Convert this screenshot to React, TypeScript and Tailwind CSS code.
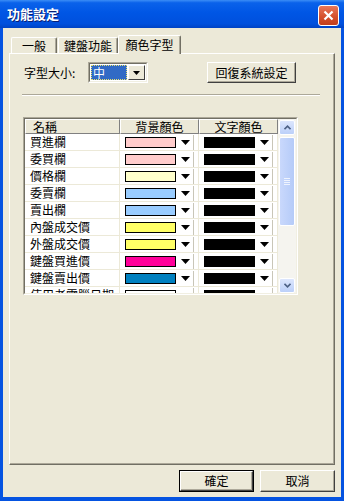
import { useState } from "react";

const rows = [
  { name: "買進欄", bg: "bg-[#FFCCCC]" },
  { name: "委買欄", bg: "bg-[#FFCCCC]" },
  { name: "價格欄", bg: "bg-[#FFFFCC]" },
  { name: "委賣欄", bg: "bg-[#99CCFF]" },
  { name: "賣出欄", bg: "bg-[#99CCFF]" },
  { name: "內盤成交價", bg: "bg-[#FFFF66]" },
  { name: "外盤成交價", bg: "bg-[#FFFF66]" },
  { name: "鍵盤買進價", bg: "bg-[#FF0099]" },
  { name: "鍵盤賣出價", bg: "bg-[#0080C0]" },
  { name: "使用者電腦日期", bg: "bg-white" },
];

function Arrow({ big }: { big?: boolean }) {
  return big ? (
    <svg width="9" height="5" viewBox="0 0 9 5">
      <path d="M0 0h9L4.5 5z" fill="#000" />
    </svg>
  ) : (
    <svg width="7" height="4" viewBox="0 0 7 4">
      <path d="M0 0h7L3.5 4z" fill="#000" />
    </svg>
  );
}

function ColorCell({ swatch }: { swatch: string }) {
  return (
    <div className="w-[79px] h-full flex items-center pl-[5px] border-r border-[#ECE9D8]">
      <div className={`w-[51px] h-[11px] border border-black ${swatch}`} />
      <div className="w-[14px] flex justify-center ml-[2px]">
        <Arrow big />
      </div>
      <div className="w-px h-[15px] bg-[#C9C6B8] ml-[1px]" />
    </div>
  );
}

function ScrollBtn({ down }: { down?: boolean }) {
  return (
    <div className="h-[15px] mx-[1px] rounded-[2px] border border-white bg-[linear-gradient(180deg,#DCE6FD,#BCD0F9)] flex items-center justify-center">
      <svg width="7" height="5" viewBox="0 0 7 5">
        <path
          d={down ? "M0.5 0.8L3.5 3.8L6.5 0.8" : "M0.5 4.2L3.5 1.2L6.5 4.2"}
          stroke="#4D6185"
          strokeWidth="1.6"
          fill="none"
        />
      </svg>
    </div>
  );
}

export default function App() {
  const [tab] = useState(2);
  const tabs = [
    { label: "一般", w: "w-[46px]" },
    { label: "鍵盤功能", w: "w-[60px] ml-[1px]" },
    { label: "顏色字型", w: "w-[63px]" },
  ];

  return (
    <div className="w-[344px] h-[501px] flex flex-col font-['Noto_Sans_CJK_TC','Noto_Sans',sans-serif] text-[12px] text-black select-none">
      {/* Title bar */}
      <div className="h-[28px] shrink-0 flex justify-between pl-[7px] pr-[5px] bg-[linear-gradient(180deg,#3B8DF6_0%,#0A62EA_10%,#0056E5_45%,#0050DD_85%,#0043C4_100%)]">
        <span className="text-white font-bold text-[13px] leading-[28px] [text-shadow:1px_1px_#0A1F73]">
          功能設定
        </span>
        <div className="mt-[5px] w-[21px] h-[21px] rounded-[3px] border border-white bg-[linear-gradient(180deg,#E8775A,#D44E2A_60%,#C23E1C)] flex items-center justify-center">
          <svg width="11" height="11" viewBox="0 0 11 11">
            <path d="M1.5 1.5L9.5 9.5M9.5 1.5L1.5 9.5" stroke="#fff" strokeWidth="2.2" />
          </svg>
        </div>
      </div>

      <div className="flex-1 flex flex-col bg-[#ECE9D8] border-x-[3px] border-b-[4px] border-[#0553E1] px-[6px] pt-[7px]">
        {/* Tabs */}
        <div className="h-[18px] flex items-end pl-[2px]">
          {tabs.map((t, i) =>
            i === tab ? (
              <div
                key={t.label}
                className={`${t.w} h-[19px] -mb-px relative z-10 bg-[#ECE9D8] border-t border-l border-white rounded-t-[2px] border-r border-r-[#716F64] shadow-[inset_-1px_0_#ACA899] flex items-center justify-center pb-[1px]`}
              >
                {t.label}
              </div>
            ) : (
              <div
                key={t.label}
                className={`${t.w} h-[16px] border-t border-l border-white rounded-t-[2px] border-r border-r-[#716F64] shadow-[inset_-1px_0_#ACA899] flex items-center justify-center`}
              >
                {t.label}
              </div>
            )
          )}
        </div>

        {/* Panel */}
        <div className="h-[412px] border-t border-l border-white border-r border-b border-r-[#716F64] border-b-[#716F64] shadow-[inset_-1px_-1px_#ACA899] pt-[8px] pl-[12px]">
          <div className="h-[21px] flex items-center">
            <span className="ml-[2px] w-[64px]">字型大小:</span>
            <div className="w-[60px] h-[21px] border border-t-[#ACA899] border-l-[#ACA899] border-b-white border-r-white">
              <div className="h-full border border-t-[#716F64] border-l-[#716F64] border-b-[#F1EFE2] border-r-[#F1EFE2] bg-white flex p-[1px]">
                <div className="flex-1 bg-[#316AC5] border border-dotted border-[#E8E070] text-white leading-[13px] pl-[1px]">
                  中
                </div>
                <div className="w-[17px] ml-[1px] bg-[#ECE9D8] border border-t-white border-l-white border-b-[#404040] border-r-[#404040] flex items-center justify-center">
                  <Arrow />
                </div>
              </div>
            </div>
            <div className="ml-[59px] w-[89px] h-[21px] bg-[#ECE9D8] border border-t-white border-l-white border-b-[#404040] border-r-[#404040] shadow-[inset_-1px_-1px_#ACA899] flex items-center justify-center">
              回復系統設定
            </div>
          </div>

          <div className="mt-[11px] w-[298px] h-[2px] border-t border-[#ACA899] border-b border-b-white" />

          {/* Table */}
          <div className="mt-[21px] ml-[1px] w-[275px] h-[178px] border border-t-[#ACA899] border-l-[#ACA899] border-b-white border-r-white">
            <div className="h-full flex border border-t-[#716F64] border-l-[#716F64] border-b-[#F1EFE2] border-r-[#F1EFE2] bg-white">
              <div className="w-[253px] h-full overflow-hidden">
                <div className="h-[15px] flex bg-[#ECE9D8]">
                  <div className="w-[95px] overflow-hidden border-t border-l border-white border-r border-b border-r-[#808080] border-b-[#808080] pl-[7px] leading-[13px]">
                    名稱
                  </div>
                  <div className="w-[79px] overflow-hidden border-t border-l border-white border-r border-b border-r-[#808080] border-b-[#808080] text-center leading-[13px]">
                    背景顏色
                  </div>
                  <div className="w-[79px] overflow-hidden border-t border-l border-white border-r border-b border-r-[#808080] border-b-[#808080] text-center leading-[13px]">
                    文字顏色
                  </div>
                </div>
                {rows.map((r) => (
                  <div key={r.name} className="h-[17px] flex border-b border-[#ECE9D8]">
                    <div className="w-[95px] border-r border-[#ECE9D8] pl-[5px] leading-[16px] whitespace-nowrap overflow-hidden">
                      {r.name}
                    </div>
                    <ColorCell swatch={r.bg} />
                    <ColorCell swatch="bg-black" />
                  </div>
                ))}
              </div>

              {/* Scrollbar */}
              <div className="w-[18px] h-full bg-[#F5F4EF] flex flex-col pt-[1px]">
                <ScrollBtn />
                <div className="mt-[2px] h-[89px] mx-[1px] rounded-[2px] border border-white bg-[linear-gradient(90deg,#C9D8FC,#B5CBF8)] flex flex-col items-center justify-center gap-[1px]">
                  <div className="w-[6px] h-px bg-[#EEF3FE]" />
                  <div className="w-[6px] h-px bg-[#EEF3FE]" />
                  <div className="w-[6px] h-px bg-[#EEF3FE]" />
                  <div className="w-[6px] h-px bg-[#EEF3FE]" />
                </div>
                <div className="flex-1" />
                <ScrollBtn down />
              </div>
            </div>
          </div>
        </div>

        {/* Dialog buttons */}
        <div className="mt-[5px] flex justify-end gap-[6px]">
          <div className="w-[75px] h-[22px] border border-black">
            <div className="h-full border border-t-white border-l-white border-b-[#404040] border-r-[#404040] shadow-[inset_-1px_-1px_#ACA899] flex items-center justify-center">
              確定
            </div>
          </div>
          <div className="w-[75px] h-[22px] border border-t-white border-l-white border-b-[#404040] border-r-[#404040] shadow-[inset_-1px_-1px_#ACA899] flex items-center justify-center">
            取消
          </div>
        </div>
      </div>
    </div>
  );
}
